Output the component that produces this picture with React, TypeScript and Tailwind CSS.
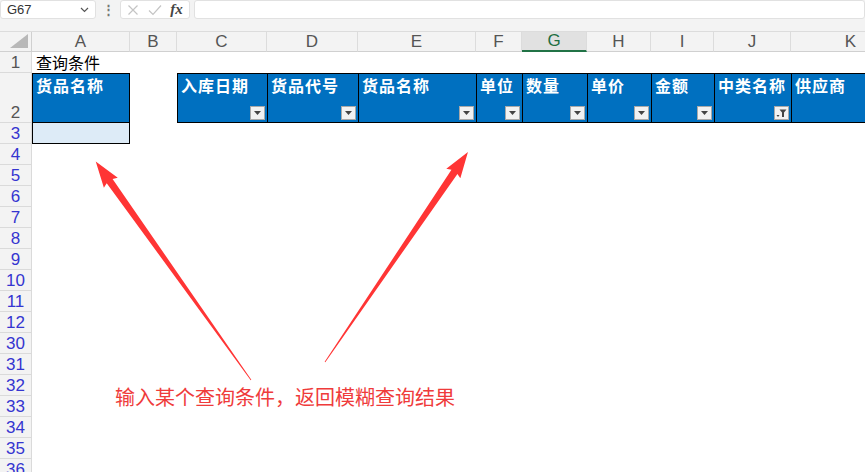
import React from "react";

const cols = [
  { key: "A", w: 98 },
  { key: "B", w: 47 },
  { key: "C", w: 90 },
  { key: "D", w: 91 },
  { key: "E", w: 118 },
  { key: "F", w: 46 },
  { key: "G", w: 65 },
  { key: "H", w: 64 },
  { key: "I", w: 63 },
  { key: "J", w: 77 },
  { key: "K", w: 120 },
];

const headers = ["入库日期", "货品代号", "货品名称", "单位", "数量", "单价", "金额", "中类名称", "供应商"];
const lowerRows = [4, 5, 6, 7, 8, 9, 10, 11, 12, 30, 31, 32, 33, 34, 35, 36];

const DropBtn = ({ filter }: { filter?: boolean }) => (
  <div className="absolute right-[2px] bottom-[2px] w-[15px] h-[14px] bg-[#f2f2f2] border border-[#a9a9a9] flex items-center justify-center">
    {filter ? (
      <svg width="11" height="10" viewBox="0 0 11 10">
        <path d="M3.5 1.5h7L8 4.5v4.5H6V4.5z" fill="#444" />
        <path d="M0.5 7h3L2 9z" fill="#444" />
      </svg>
    ) : (
      <svg width="7" height="4" viewBox="0 0 7 4">
        <path d="M0 0h7L3.5 4z" fill="#444" />
      </svg>
    )}
  </div>
);

const RowHead = ({ n, h, blue }: { n: number; h: number; blue?: boolean }) => (
  <div
    className={`w-[32px] shrink-0 bg-[#f3f3f3] border-b border-r border-[#dadada] flex justify-center items-end text-[17px] leading-none pb-[1px] ${blue ? "text-[#3535d0]" : "text-[#555]"}`}
    style={{ height: h }}
  >
    {n}
  </div>
);

export default function App() {
  return (
    <div className="relative w-[865px] h-[472px] overflow-hidden bg-white" style={{ fontFamily: '"Liberation Sans", "Noto Sans CJK SC", sans-serif' }}>
      {/* formula bar */}
      <div className="h-[20px] bg-[#f3f3f3] flex items-stretch">
        <div className="w-[96px] h-[19px] bg-white border border-[#e1e1e1] rounded-[3px] flex items-center justify-between px-[6px]">
          <span className="text-[13px] text-[#333]">G67</span>
          <svg width="9" height="6" viewBox="0 0 9 6"><path d="M1 1l3.5 3.5L8 1" stroke="#555" strokeWidth="1.2" fill="none" /></svg>
        </div>
        <div className="w-[24px] flex items-center justify-center text-[#777] text-[13px] font-bold">⋮</div>
        <div className="w-[70px] h-[19px] bg-white border border-[#e1e1e1] rounded-[3px] flex items-center justify-around px-[2px]">
          <svg width="12" height="12" viewBox="0 0 12 12"><path d="M1.5 1.5l9 9M10.5 1.5l-9 9" stroke="#c4c4c4" strokeWidth="1.2" /></svg>
          <svg width="14" height="12" viewBox="0 0 14 12"><path d="M1 6.5l4 4L13 1.5" stroke="#c4c4c4" strokeWidth="1.2" fill="none" /></svg>
          <span className="text-[15px] italic font-bold text-[#444]" style={{ fontFamily: '"Liberation Serif", serif' }}>fx</span>
        </div>
        <div className="ml-[4px] flex-1 h-[19px] bg-white border border-[#e1e1e1] rounded-[3px]" />
      </div>
      <div className="h-[11px] bg-[#f3f3f3]" />

      {/* column headers */}
      <div className="flex h-[21px] border-t border-[#dcdcdc]">
        <div className="w-[32px] shrink-0 bg-[#f3f3f3] border-r border-b border-[#d0d0d0] flex items-end justify-end p-[3px]">
          <svg width="18" height="14" viewBox="0 0 18 14"><path d="M18 0V14H0z" fill="#b8b8b8" /></svg>
        </div>
        {cols.map((c) => (
          <div
            key={c.key}
            className={`shrink-0 flex items-center justify-center text-[17px] border-r border-[#dcdcdc] ${c.key === "G" ? "bg-[#e1e1e1] text-[#1c6e42] border-b-2 border-b-[#217346]" : "bg-[#f3f3f3] text-[#555] border-b border-b-[#d0d0d0]"}`}
            style={{ width: c.w }}
          >
            {c.key}
          </div>
        ))}
      </div>

      {/* row 1 */}
      <div className="flex h-[21px]">
        <RowHead n={1} h={21} />
        <div className="pl-[4px] text-[16px] leading-[21px] text-black" style={{ fontFamily: '"Noto Sans CJK SC", sans-serif' }}>
          查询条件
        </div>
      </div>

      {/* row 2 */}
      <div className="flex h-[50px]">
        <RowHead n={2} h={50} />
        <div className="w-[98px] shrink-0 bg-[#0070c0] border border-black text-white font-bold text-[16px] leading-[22px] px-[3px] tracking-[1px]" style={{ fontFamily: '"Noto Sans CJK SC", sans-serif' }}>
          货品名称
        </div>
        <div className="w-[47px] shrink-0" />
        <div className="flex border-y border-black" style={{ fontFamily: '"Noto Sans CJK SC", sans-serif' }}>
          {headers.map((h, i) => (
            <div
              key={h + i}
              className="relative shrink-0 bg-[#0070c0] border-l border-black text-white font-bold text-[16px] leading-[22px] px-[3px] tracking-[1px] whitespace-nowrap"
              style={{ width: cols[i + 2].w }}
            >
              {h}
              <DropBtn filter={i === 7} />
            </div>
          ))}
        </div>
      </div>

      {/* row 3 */}
      <div className="flex h-[21px]">
        <RowHead n={3} h={21} blue />
        <div className="w-[98px] shrink-0 bg-[#ddebf7] border-x border-b border-black" />
      </div>

      {lowerRows.map((n) => (
        <div key={n} className="flex h-[21px]">
          <RowHead n={n} h={21} blue />
        </div>
      ))}

      {/* annotation overlay */}
      <svg className="absolute left-0 top-0 pointer-events-none" width="865" height="472">
        <g transform="translate(251 380) rotate(-125.4)">
          <polygon points="0,-0.4 244,-3.6 242,-8.5 268,0 242,8.5 244,3.6 0,0.4" fill="#ff3535" />
        </g>
        <g transform="translate(325 362) rotate(-55.75)">
          <polygon points="0,-0.4 230,-3.6 228,-8.5 254,0 228,8.5 230,3.6 0,0.4" fill="#ff3535" />
        </g>
      </svg>
      <div
        className="absolute left-[115px] top-[385px] text-[20px] leading-[24px] text-[#ef3b3b] whitespace-nowrap"
        style={{ fontFamily: '"Noto Sans CJK SC", sans-serif' }}
      >
        输入某个查询条件，返回模糊查询结果
      </div>
    </div>
  );
}
